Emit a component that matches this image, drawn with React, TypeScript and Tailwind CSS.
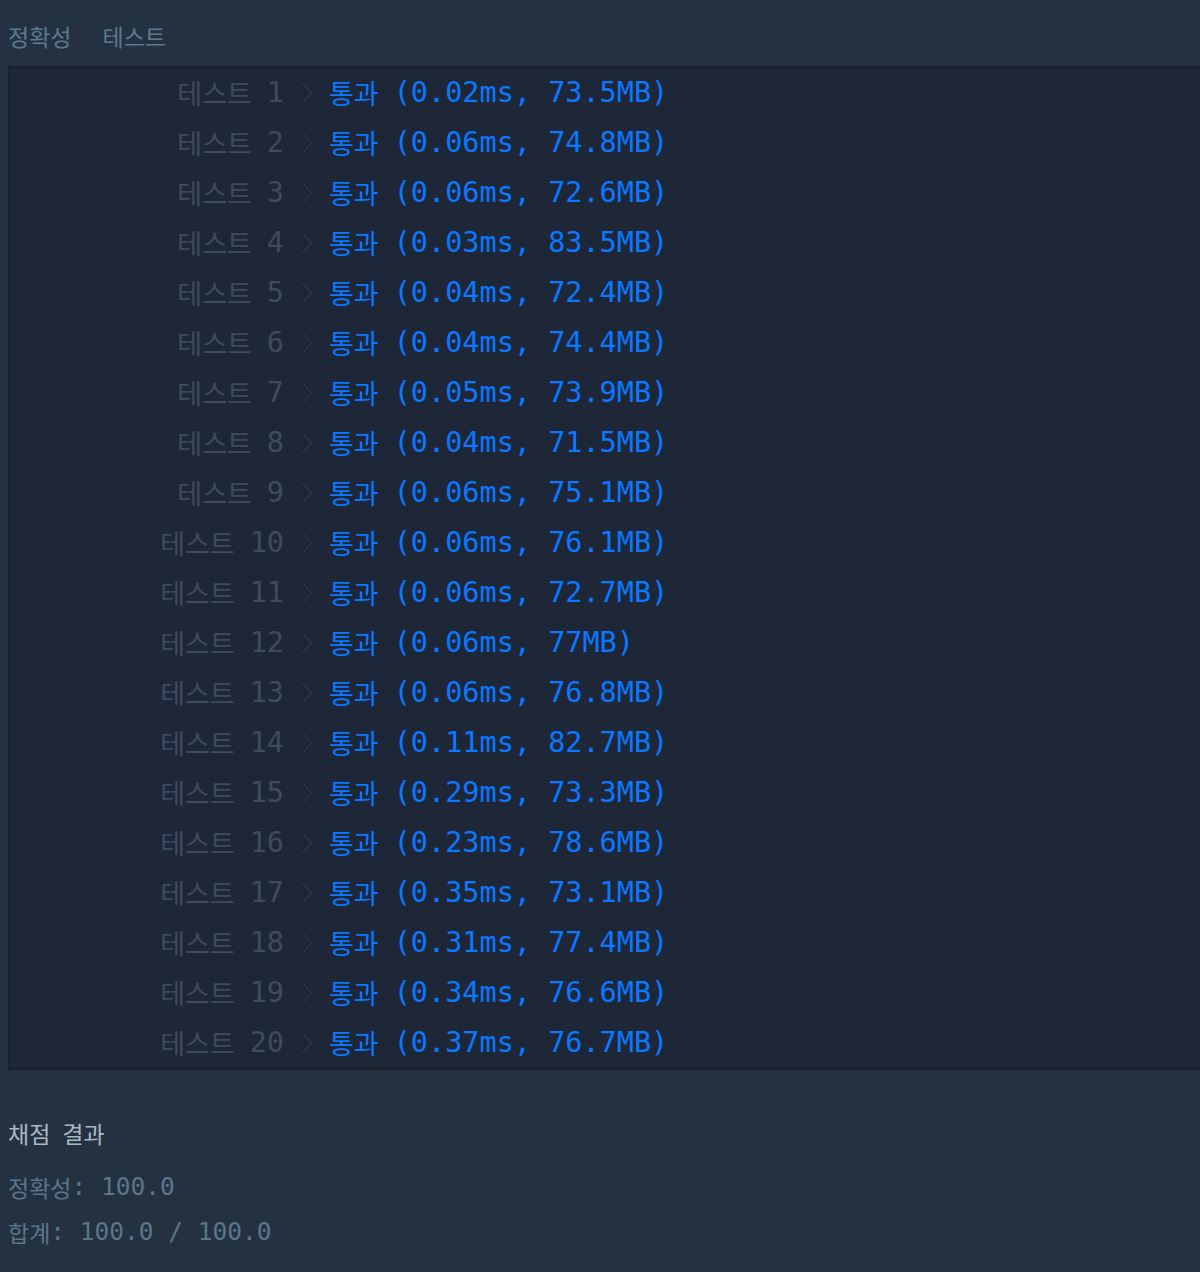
import React from 'react'

const results = [
  ['0.02ms', '73.5MB'],
  ['0.06ms', '74.8MB'],
  ['0.06ms', '72.6MB'],
  ['0.03ms', '83.5MB'],
  ['0.04ms', '72.4MB'],
  ['0.04ms', '74.4MB'],
  ['0.05ms', '73.9MB'],
  ['0.04ms', '71.5MB'],
  ['0.06ms', '75.1MB'],
  ['0.06ms', '76.1MB'],
  ['0.06ms', '72.7MB'],
  ['0.06ms', '77MB'],
  ['0.06ms', '76.8MB'],
  ['0.11ms', '82.7MB'],
  ['0.29ms', '73.3MB'],
  ['0.23ms', '78.6MB'],
  ['0.35ms', '73.1MB'],
  ['0.31ms', '77.4MB'],
  ['0.34ms', '76.6MB'],
  ['0.37ms', '76.7MB'],
]

const mono = "font-['DejaVu_Sans_Mono','Noto_Sans_CJK_KR',monospace]"
const ko = "font-['Noto_Sans_CJK_KR',sans-serif]"

const Chevron = () => (
  <svg width="12" height="24" viewBox="0 0 12 24" className="shrink-0">
    <path d="M1.5 2 L10.5 12 L1.5 22" fill="none" stroke="#2c3748" strokeWidth="1.3" />
  </svg>
)

export default function App() {
  return (
    <div className="w-[1200px] h-[1272px] bg-[#243141] overflow-hidden">
      <div className={`${ko} h-[66px] flex items-center gap-[31px] pl-2 pt-[6px] text-[23px] text-[#5c7a8d]`}>
        <span>정확성</span>
        <span>테스트</span>
      </div>

      <div className="ml-2 w-[1200px] border-2 border-[#19212d] border-r-0 bg-[#1e2737]">
        {results.map(([time, mem], i) => (
          <div key={i} className={`${mono} h-[50px] flex items-center text-[28.5px] leading-none`}>
            <div className="w-[274px] flex justify-end items-center text-[#3d4b5e] whitespace-pre">
              <span className={`${ko} text-[27px] -translate-y-[1px]`}>테스트</span>
              <span className="ml-[15px]">{i + 1}</span>
            </div>
            <div className="ml-[17px] mr-[16px] flex items-center">
              <Chevron />
            </div>
            <div className="flex items-center text-[#0a78ff] whitespace-pre">
              <span className={`${ko} text-[27px] -translate-y-[1px]`}>통과</span>
              <span className="ml-[15px]">({time}, {mem})</span>
            </div>
          </div>
        ))}
      </div>

      <div className="pl-2 pt-[48px]">
        <div className={`${ko} flex gap-[12px] text-[23px] text-[#aab8c4] h-[30px] items-center`}>
          <span>채점</span>
          <span>결과</span>
        </div>
        <div className="mt-[24px] flex items-center h-[30px] text-[#5b7689] whitespace-pre">
          <span className={`${ko} text-[23px]`}>정확성</span>
          <span className={`${mono} text-[24.5px]`}>: 100.0</span>
        </div>
        <div className="mt-[15px] flex items-center h-[30px] text-[#5b7689] whitespace-pre">
          <span className={`${ko} text-[23px]`}>합계</span>
          <span className={`${mono} text-[24.5px]`}>: 100.0 / 100.0</span>
        </div>
      </div>
    </div>
  )
}
